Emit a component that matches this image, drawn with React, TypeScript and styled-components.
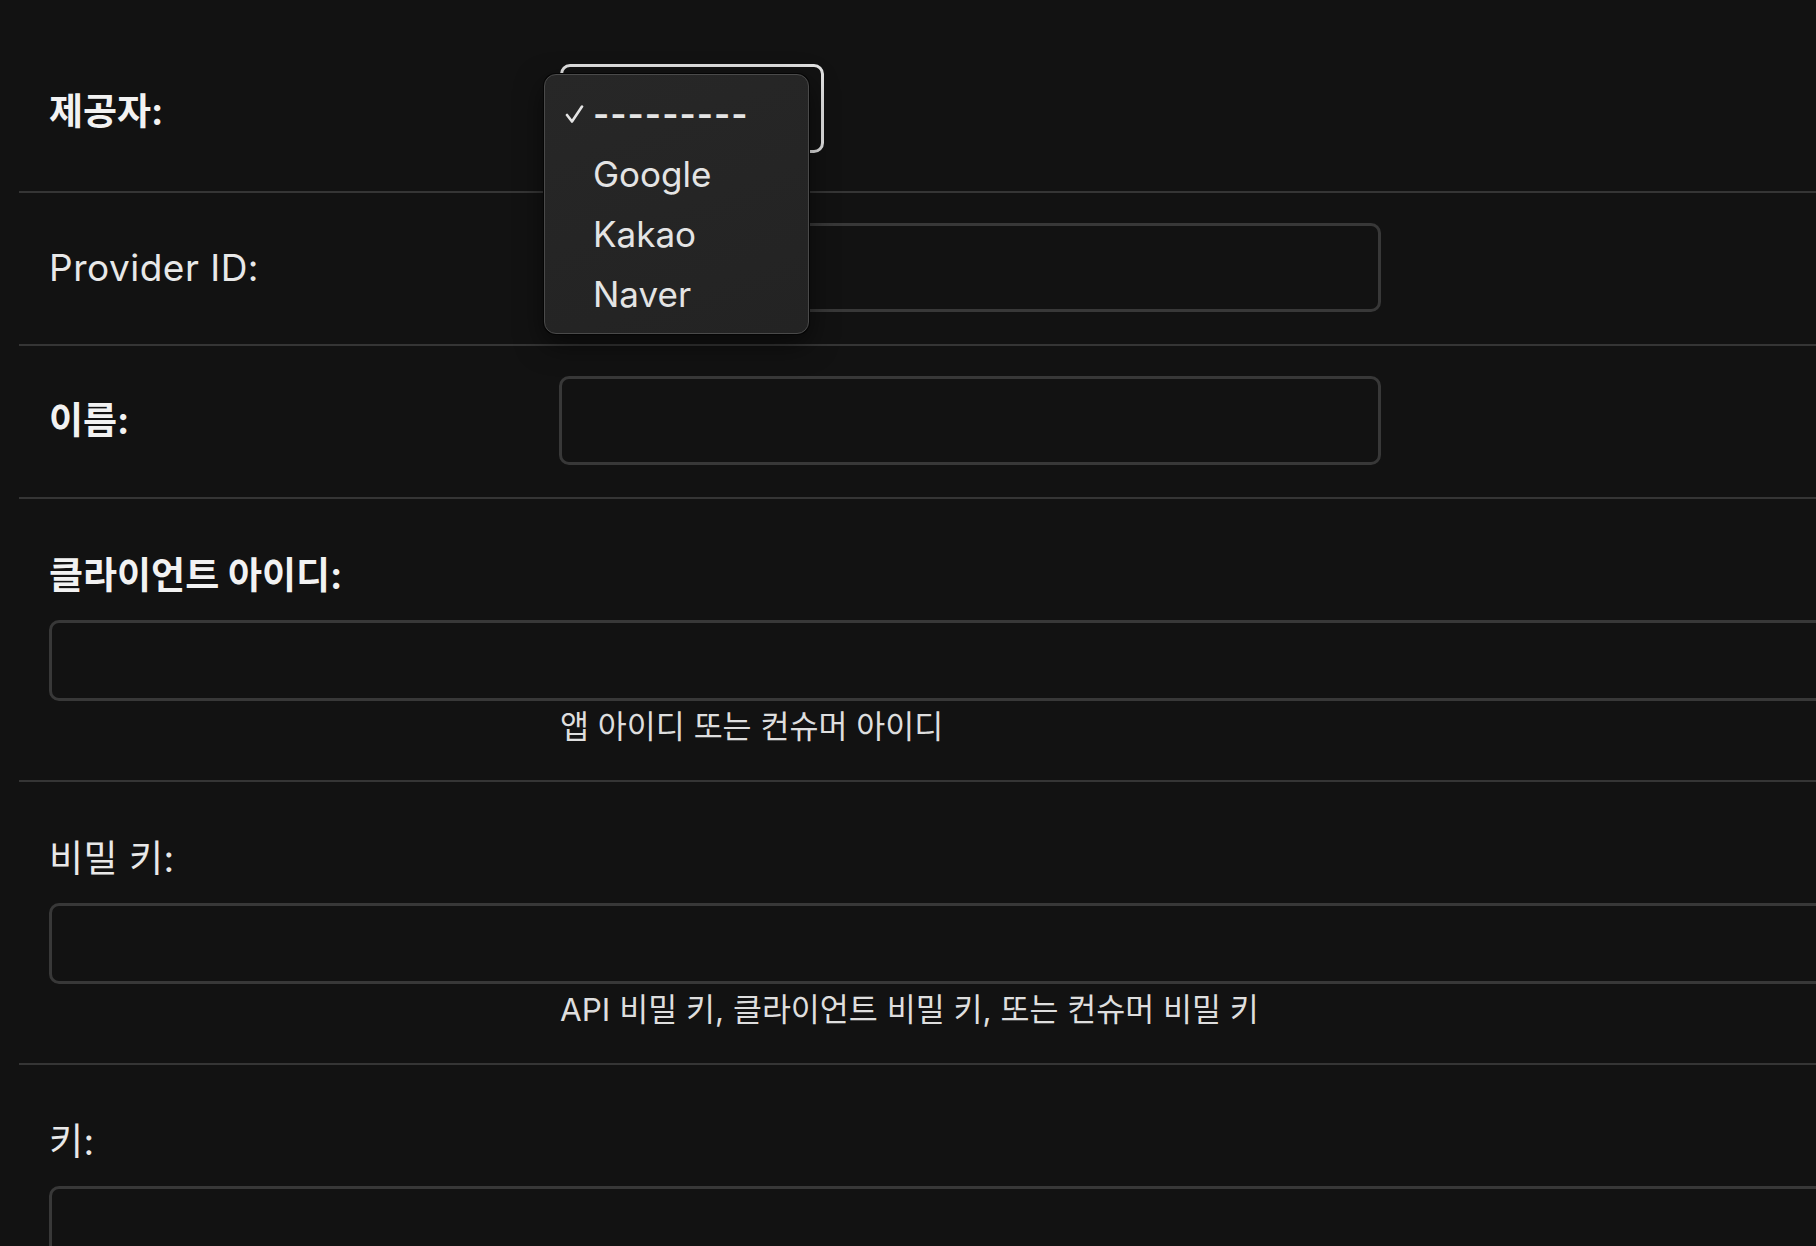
import styled, { createGlobalStyle } from "styled-components";

const GlobalStyle = createGlobalStyle`
  html, body {
    margin: 0;
    background: #121212;
    overflow: hidden;
  }
  body {
    font-family: Inter, "Noto Sans CJK KR", sans-serif;
    color: #eeeeee;
  }
`;

const Form = styled.form`
  padding: 34px 0 0 19px;
`;

const Row = styled.div<{ $wide?: boolean }>`
  display: flex;
  flex-direction: ${(p) => (p.$wide ? "column" : "row")};
  align-items: ${(p) => (p.$wide ? "flex-start" : "center")};
  padding: ${(p) => (p.$wide ? "55px 0 33px 30px" : "30px 0 32px 30px")};
  border-bottom: 2px solid #353535;
`;

const Label = styled.label<{ $required?: boolean }>`
  flex: none;
  width: 510px;
  font-size: 37px;
  line-height: 44px;
  letter-spacing: ${(p) => (p.$required ? "0" : "0.5px")};
  font-weight: ${(p) => (p.$required ? 700 : 400)};
  color: ${(p) => (p.$required ? "#f2f2f2" : "#e8e8e8")};
`;

const TextInput = styled.input<{ $wide?: boolean }>`
  box-sizing: border-box;
  width: ${(p) => (p.$wide ? "1840px" : "822px")};
  height: ${(p) => (p.$wide ? "81px" : "89px")};
  margin-top: ${(p) => (p.$wide ? "22px" : "0")};
  background: #121212;
  border: 3px solid #383838;
  border-radius: 10px;
  outline: none;
`;

const Help = styled.div`
  margin: 6px 0 0 511px;
  font-size: 31.5px;
  line-height: 40px;
  color: #dedede;
`;

const SelectWrap = styled.div`
  position: relative;
  width: 264px;
  height: 89px;
  margin-bottom: 6px;
  margin-left: 1px;
`;

const SelectBox = styled.div`
  box-sizing: border-box;
  width: 100%;
  height: 100%;
  border: 3px solid #e2e2e2;
  border-radius: 10px;
  background: #121212;
`;

const Menu = styled.ul`
  position: absolute;
  left: -16px;
  top: 10px;
  box-sizing: border-box;
  width: 265px;
  margin: 0;
  padding: 9px 0;
  list-style: none;
  background: linear-gradient(160deg, #272727, #232323);
  border: 1.5px solid #4a4a4a;
  border-radius: 12px;
  box-shadow: 0 0 0 1px #050505, 0 10px 28px rgba(0, 0, 0, 0.55);
`;

const Option = styled.li`
  position: relative;
  display: flex;
  align-items: center;
  height: 60px;
  padding-left: 48px;
  font-size: 35px;
  color: #e4e4e4;
`;

const Dashes = styled.span`
  letter-spacing: 1px;
  font-weight: 600;
`;

const Check = styled.svg`
  position: absolute;
  left: 20px;
  top: 21px;
`;

const providers = ["Google", "Kakao", "Naver"];

export default function App() {
  return (
    <>
      <GlobalStyle />
      <Form>
        <Row>
          <Label $required>제공자:</Label>
          <SelectWrap>
            <SelectBox />
            <Menu>
              <Option>
                <Check width="19" height="18" viewBox="0 0 19 18">
                  <polyline
                    points="2,10 7,16.5 17,1.5"
                    fill="none"
                    stroke="#e4e4e4"
                    strokeWidth="2.6"
                    strokeLinecap="round"
                    strokeLinejoin="round"
                  />
                </Check>
                <Dashes>---------</Dashes>
              </Option>
              {providers.map((p) => (
                <Option key={p}>{p}</Option>
              ))}
            </Menu>
          </SelectWrap>
        </Row>
        <Row>
          <Label>Provider ID:</Label>
          <TextInput />
        </Row>
        <Row>
          <Label $required>이름:</Label>
          <TextInput />
        </Row>
        <Row $wide>
          <Label $required>클라이언트 아이디:</Label>
          <TextInput $wide />
          <Help>앱 아이디 또는 컨슈머 아이디</Help>
        </Row>
        <Row $wide>
          <Label>비밀 키:</Label>
          <TextInput $wide />
          <Help>API 비밀 키, 클라이언트 비밀 키, 또는 컨슈머 비밀 키</Help>
        </Row>
        <Row $wide>
          <Label>키:</Label>
          <TextInput $wide />
        </Row>
      </Form>
    </>
  );
}
